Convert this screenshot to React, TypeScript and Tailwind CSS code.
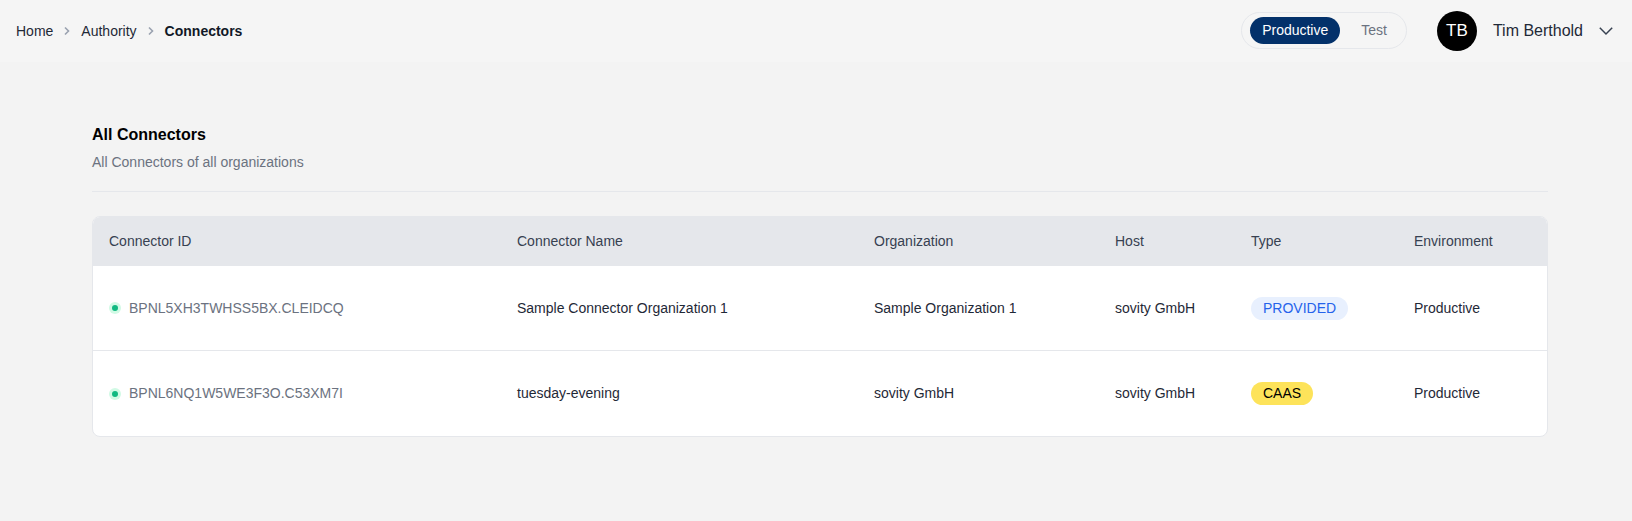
import React from "react";

const rows = [
  {
    id: "BPNL5XH3TWHSS5BX.CLEIDCQ",
    name: "Sample Connector Organization 1",
    org: "Sample Organization 1",
    host: "sovity GmbH",
    type: "PROVIDED",
    env: "Productive",
  },
  {
    id: "BPNL6NQ1W5WE3F3O.C53XM7I",
    name: "tuesday-evening",
    org: "sovity GmbH",
    host: "sovity GmbH",
    type: "CAAS",
    env: "Productive",
  },
];

function Chevron() {
  return (
    <svg width="8" height="10" viewBox="0 0 8 10" fill="none" className="text-gray-400">
      <path d="M2 1.5 L5.5 5 L2 8.5" stroke="currentColor" strokeWidth="1.6" />
    </svg>
  );
}

export default function App() {
  const grid = "grid grid-cols-[408px_357px_241px_136px_163px_1fr]";
  return (
    <div
      className="min-h-[521px] bg-[#f3f3f3] text-[#1f2937]"
      style={{ fontFamily: '"Liberation Sans", Arial, sans-serif' }}
    >
      <header className="h-[62px] bg-[#f5f5f5] flex items-center justify-between pl-[16px] pr-[19px]">
        <nav className="flex items-center gap-[10px] text-[14px] text-[#1f2937]">
          <span>Home</span>
          <Chevron />
          <span>Authority</span>
          <Chevron />
          <span className="font-bold text-[#111827]">Connectors</span>
        </nav>
        <div className="flex items-center">
          <div className="flex items-center h-[37px] rounded-full border border-[#e5e7eb] bg-[#f5f5f5] pl-[8px] mt-[-1px]">
            <span className="h-[27px] w-[90px] flex items-center justify-center rounded-full bg-[#03316a] text-white text-[14px]">
              Productive
            </span>
            <span className="pl-[21px] pr-[19px] text-[14px] text-[#6b7280]">Test</span>
          </div>
          <div className="ml-[30px] w-[40px] h-[40px] rounded-full bg-black text-white flex items-center justify-center text-[17px]">
            TB
          </div>
          <span className="ml-[16px] text-[16px] text-[#1f2937]">Tim Berthold</span>
          <svg width="14" height="9" viewBox="0 0 14 9" fill="none" className="ml-[16px] text-[#374151]">
            <path d="M0.8 0.8 L7 7 L13.2 0.8" stroke="currentColor" strokeWidth="1.5" />
          </svg>
        </div>
      </header>

      <main className="pl-[92px] pr-[84px] pt-[63px]">
        <h1 className="text-[16px] font-bold text-black leading-[20px]">All Connectors</h1>
        <p className="mt-[8px] text-[14px] text-[#6b7280] leading-[18px]">All Connectors of all organizations</p>
        <div className="mt-[20px] h-px bg-[#e5e7eb]" />

        <div className="mt-[24px] rounded-[8px] border border-[#e5e7eb] bg-white overflow-hidden">
          <div className={`${grid} h-[49px] items-center bg-[#e5e7eb] text-[14px] text-[#374151]`}>
            <div className="pl-[16px]">Connector ID</div>
            <div className="pl-[16px]">Connector Name</div>
            <div className="pl-[16px]">Organization</div>
            <div className="pl-[16px]">Host</div>
            <div className="pl-[16px]">Type</div>
            <div className="pl-[16px]">Environment</div>
          </div>
          {rows.map((r, i) => (
            <div
              key={r.id}
              className={`${grid} h-[85px] items-center text-[14px] text-[#1f2937] ${i === 0 ? "border-b border-[#e5e7eb]" : ""}`}
            >
              <div className="pl-[16px] flex items-center gap-[8px]">
                <span className="w-[12px] h-[12px] rounded-full bg-[#d1fae5] flex items-center justify-center">
                  <span className="w-[6px] h-[6px] rounded-full bg-[#10b981]" />
                </span>
                <span className="text-[#6b7280]">{r.id}</span>
              </div>
              <div className="pl-[16px]">{r.name}</div>
              <div className="pl-[16px]">{r.org}</div>
              <div className="pl-[16px]">{r.host}</div>
              <div className="pl-[16px]">
                {r.type === "PROVIDED" ? (
                  <span className="inline-flex items-center h-[23px] px-[12px] rounded-full bg-[#e8f0fe] text-[#2563eb] text-[14px]">
                    PROVIDED
                  </span>
                ) : (
                  <span className="inline-flex items-center h-[23px] px-[12px] rounded-full bg-[#fde35a] text-black text-[14px]">
                    CAAS
                  </span>
                )}
              </div>
              <div className="pl-[16px]">{r.env}</div>
            </div>
          ))}
        </div>
      </main>
    </div>
  );
}
